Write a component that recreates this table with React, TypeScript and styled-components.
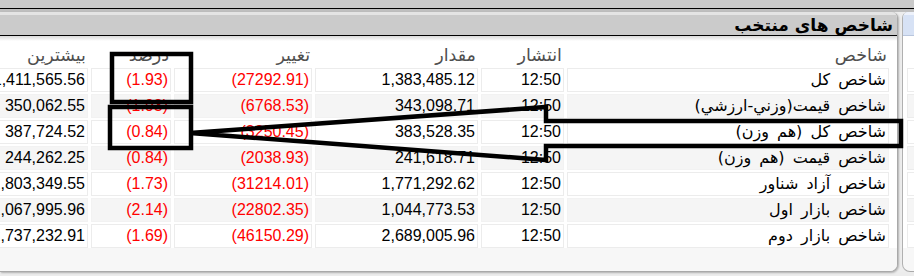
import React from "react";
import styled, { createGlobalStyle } from "styled-components";

const Global = createGlobalStyle`
  html, body { margin: 0; padding: 0; }
  body {
    width: 914px;
    height: 276px;
    overflow: hidden;
    background: #ececec;
    font-family: "Liberation Sans", "DejaVu Sans", sans-serif;
  }
`;

const Page = styled.div`
  position: relative;
  width: 914px;
  height: 276px;
  overflow: hidden;
  display: flex;
  flex-direction: column;
`;

const TopStrip = styled.div`
  flex: none;
  height: 8px;
  background: #cacaca;
  border-bottom: 1px solid #000;
`;

const Panels = styled.div`
  flex: none;
  display: flex;
  gap: 4px;
  height: 263px;
  padding-top: 3px;
  box-sizing: border-box;
  background: linear-gradient(#bfbfbf 0 3px, #ededed 3px);
`;

const MainPanel = styled.section`
  flex: none;
  width: 897px;
  display: flex;
  flex-direction: column;
  background: #f7f7f7;
  border-right: 1px solid #a9a9a9;
  border-bottom: 1px solid #a9a9a9;
  border-radius: 0 6px 8px 0;
  box-shadow: 1px 1px 2px rgba(0, 0, 0, 0.25);
  overflow: hidden;
`;

const TitleBar = styled.div`
  flex: none;
  height: 20px;
  border-top: 3px solid #e4e4e4;
  border-bottom: 1px solid #000;
  background: #cbcbcb;
  direction: rtl;
  padding-right: 4px;
  font-family: "DejaVu Sans", sans-serif;
  font-weight: bold;
  font-size: 17px;
  line-height: 21px;
  color: #000;
  white-space: nowrap;
`;

const Body = styled.div`
  flex: 1;
  overflow: hidden;
  direction: rtl;
  padding: 6px 8px 0 0;
  background: linear-gradient(#d9d9d9, #ffffff 5px, #ffffff 212px, #f7f7f7 212px);
`;

const Grid = styled.div`
  display: grid;
  grid-template-columns: 322px 83px 163px 138px 80px 130px;
  grid-auto-rows: 24px;
  column-gap: 3px;
  row-gap: 2px;
  justify-content: start;
  width: max-content;
`;

const HeadCell = styled.div`
  box-sizing: border-box;
  padding: 0 2px;
  font-family: "DejaVu Sans", sans-serif;
  font-size: 17.5px;
  line-height: 26px;
  color: #4f4f4f;
  text-align: right;
  white-space: nowrap;
  overflow: hidden;
`;

const Cell = styled.div<{ $alt: boolean; $red?: boolean; $num?: boolean }>`
  box-sizing: border-box;
  border: 1px solid ${(p) => (p.$alt ? "#f2f2f2" : "#ececec")};
  background: ${(p) => (p.$alt ? "#f5f5f5" : "#ffffff")};
  padding: 0 2px;
  direction: ${(p) => (p.$num ? "ltr" : "rtl")};
  text-align: right;
  font-family: ${(p) =>
    p.$num ? `"Liberation Sans", sans-serif` : `"DejaVu Sans", sans-serif`};
  font-size: 16px;
  word-spacing: ${(p) => (p.$num ? "0" : "3px")};
  line-height: 22px;
  color: ${(p) => (p.$red ? "#ff0000" : "#000")};
  white-space: nowrap;
  overflow: hidden;
`;

const SidePanel = styled.section`
  flex: 1;
  display: flex;
  flex-direction: column;
  background: #f7f7f7;
  border-left: 1px solid #b0b0b0;
  border-bottom: 1px solid #a9a9a9;
  border-radius: 6px 0 0 8px;
  overflow: hidden;
`;

const SideTitle = styled.div`
  flex: none;
  height: 20px;
  border-top: 3px solid #eef2fb;
  border-bottom: 1px solid #b9c6dd;
  background: #d7e2f5;
`;

const SideRows = styled.div`
  display: flex;
  flex-direction: column;
  gap: 2px;
  padding: 32px 0 0 4px;
  background: #fff;
`;

const SideCell = styled.div<{ $alt: boolean }>`
  height: 24px;
  box-sizing: border-box;
  border: 1px solid #ececec;
  border-right: none;
  background: ${(p) => (p.$alt ? "#f5f5f5" : "#ffffff")};
`;

const Overlay = styled.svg`
  position: absolute;
  left: 0;
  top: 0;
  pointer-events: none;
`;

type Row = {
  name: string;
  time: string;
  amount: string;
  change: string;
  pct: string;
  max: string;
};

const rows: Row[] = [
  { name: "شاخص كل", time: "12:50", amount: "1,383,485.12", change: "(27292.91)", pct: "(1.93)", max: "1,411,565.56" },
  { name: "شاخص قيمت(وزني-ارزشي)", time: "12:50", amount: "343,098.71", change: "(6768.53)", pct: "(1.93)", max: "350,062.55" },
  { name: "شاخص كل (هم وزن)", time: "12:50", amount: "383,528.35", change: "(3250.45)", pct: "(0.84)", max: "387,724.52" },
  { name: "شاخص قيمت (هم وزن)", time: "12:50", amount: "241,618.71", change: "(2038.93)", pct: "(0.84)", max: "244,262.25" },
  { name: "شاخص آزاد شناور", time: "12:50", amount: "1,771,292.62", change: "(31214.01)", pct: "(1.73)", max: "1,803,349.55" },
  { name: "شاخص بازار اول", time: "12:50", amount: "1,044,773.53", change: "(22802.35)", pct: "(2.14)", max: "1,067,995.96" },
  { name: "شاخص بازار دوم", time: "12:50", amount: "2,689,005.96", change: "(46150.29)", pct: "(1.69)", max: "2,737,232.91" },
];

const headers = ["شاخص", "انتشار", "مقدار", "تغيير", "درصد", "بيشترين"];

export default function App() {
  return (
    <>
      <Global />
      <Page>
        <TopStrip />
        <Panels>
          <MainPanel>
            <TitleBar>شاخص های منتخب</TitleBar>
            <Body>
              <Grid>
                {headers.map((h) => (
                  <HeadCell key={h}>{h}</HeadCell>
                ))}
                {rows.map((r, i) => {
                  const alt = i % 2 === 1;
                  return (
                    <React.Fragment key={r.name}>
                      <Cell $alt={alt}>{r.name}</Cell>
                      <Cell $alt={alt} $num>{r.time}</Cell>
                      <Cell $alt={alt} $num>{r.amount}</Cell>
                      <Cell $alt={alt} $num $red>{r.change}</Cell>
                      <Cell $alt={alt} $num $red>{r.pct}</Cell>
                      <Cell $alt={alt} $num>{r.max}</Cell>
                    </React.Fragment>
                  );
                })}
              </Grid>
            </Body>
          </MainPanel>
          <SidePanel>
            <SideTitle />
            <SideRows>
              {rows.map((r, i) => (
                <SideCell key={r.name} $alt={i % 2 === 1} />
              ))}
            </SideRows>
          </SidePanel>
        </Panels>
        <Overlay width="914" height="276" viewBox="0 0 914 276">
          <g fill="none" stroke="#000" strokeWidth="4.5" strokeLinejoin="miter">
            <rect x="112" y="54" width="79" height="48" />
            <rect x="110" y="107" width="81" height="41" />
            <polygon points="190,133 546,107 546,121 901,121 901,146 546,146 546,160" />
          </g>
        </Overlay>
      </Page>
    </>
  );
}
